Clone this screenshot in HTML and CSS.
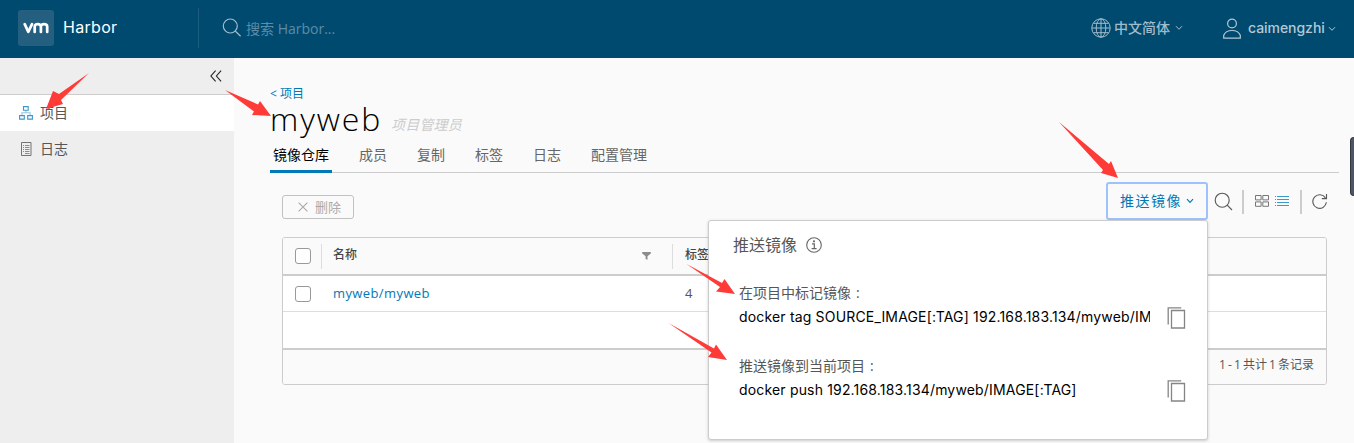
FILE: index.html
```html
<!DOCTYPE html>
<html lang="zh-CN">
<head>
<meta charset="utf-8">
<title>Harbor</title>
<link rel="stylesheet" href="styles.css">
</head>
<body>
<header class="header">
  <div class="brand">
    <span class="logo"><svg width="26" height="12" viewBox="0 0 26 12" fill="none" stroke="#fff" stroke-width="2.7" stroke-linecap="round" stroke-linejoin="round"><path d="M1.7 2.200 5.300 9.800 9 2.200"/><path d="M11.700 10V4.600Q11.700 2.200 14.700 2.200T17.900 4.600V10M17.900 4.600Q17.900 2.200 21 2.200T24.200 4.600V10"/></svg></span>
    <span class="brand-name">Harbor</span>
  </div>
  <div class="search">
    <svg width="20" height="20" viewBox="0 0 20 20" fill="none" stroke="#a3bccb" stroke-width="1.2"><circle cx="8.3" cy="8" r="7"/><path d="M13.2 13 18.6 18.3"/></svg>
    <span class="search-hint">搜索 Harbor...</span>
  </div>
  <div class="language">
    <svg width="20" height="20" viewBox="0 0 20 20" fill="none" stroke="#a3bccb" stroke-width="1"><circle cx="10" cy="10" r="9.2"/><ellipse cx="10" cy="10" rx="4.8" ry="9.2"/><path d="M10 1v18M1 10h18M2.5 5.3h15M2.5 14.7h15"/></svg>
    <span class="language-name">中文简体</span>
    <svg width="8" height="6" viewBox="0 0 8 6" fill="none" stroke="#a3bccb"><path d="M1 1.2 4 4.3 7 1.2"/></svg>
  </div>
  <div class="account">
    <svg width="20" height="22" viewBox="0 0 20 22" fill="none" stroke="#b3c8d4" stroke-width="1.2"><circle cx="10" cy="5.5" r="4.4"/><path d="M1.7 20.2V17.3Q3.7 12.5 10 12.5T18.3 17.3V20.2Z"/></svg>
    <span class="account-name">caimengzhi</span>
    <svg width="8" height="6" viewBox="0 0 8 6" fill="none" stroke="#b3c8d4"><path d="M1 1.2 4 4.3 7 1.2"/></svg>
  </div>
</header>

<div class="layout">
  <nav class="sidebar">
    <div class="collapse"><svg width="12" height="12" viewBox="0 0 12 12" fill="none" stroke="#222" stroke-width="1.1"><path d="M5.6 .7.9 6l4.7 5.3M11.1.7 6.4 6l4.7 5.3"/></svg></div>
    <a class="nav-item active">
      <svg width="14" height="14" viewBox="0 0 14 14" fill="none" stroke="#3c97cb" stroke-width="1.1"><path d="M4.5.6h4.7v3.6H4.5zM.6 9.6h4.7v3.5H.6zM8.7 9.6h4.7v3.5H8.700z"/><path d="M6.900 4.300v2.500M2.900 9.500V6.800h8.200v2.700" stroke-opacity=".55"/></svg>
      <span>项目</span>
    </a>
    <a class="nav-item">
      <svg width="14" height="14" viewBox="0 0 14 14" fill="none" stroke="#737373"><path d="M2.500.5h9.500v13h-9.500z"/><path d="M4 3.500h1M6 3.500h4.500M4 5.500h1M6 5.500h4.500M4 7.500h1M6 7.500h4.500M4 9.500h1M6 9.500h4.500M6 11.500h4.500" stroke-opacity=".8"/></svg>
      <span>日志</span>
    </a>
  </nav>

  <main class="main">
    <a class="back">&lt; 项目</a>
    <div class="title"><h1 class="project-name">myweb</h1><span class="role">项目管理员</span></div>
    <div class="tabs">
      <span class="tab current">镜像仓库</span><span class="tab">成员</span><span class="tab">复制</span><span class="tab">标签</span><span class="tab">日志</span><span class="tab">配置管理</span>
    </div>

    <section class="repositories">
      <div class="toolbar">
        <button class="delete"><svg width="10" height="10" viewBox="0 0 10 10" stroke="#aaa" stroke-width="1.1"><path d="M.6.6 9.4 9.4M9.4.6.6 9.4"/></svg><span>删除</span></button>
        <div class="actions">
          <div class="push">
            <button class="push-button"><span>推送镜像</span><svg width="8" height="6" viewBox="0 0 8 6" fill="none" stroke="#0079b8" stroke-width="1.2"><path d="M1 1.2 4 4.3 7 1.2"/></svg></button>
            <div class="popover">
              <div class="popover-title">推送镜像<svg width="16" height="16" viewBox="0 0 16 16" fill="none" stroke="#666"><circle cx="8" cy="8" r="7.3" stroke-width="1.1"/><path d="M6 6.8h2.3v4.7M5.6 11.6h5" stroke-width="1.2"/><circle cx="8" cy="4.3" r="1.1" fill="#666" stroke="none"/></svg></div>
              <div class="command-label">在项目中标记镜像<span class="colon">:</span></div>
              <div class="command"><code class="command-text">docker tag SOURCE_IMAGE[:TAG] 192.168.183.134/myweb/IMAGE[:TAG]</code><svg class="copy" width="20" height="22" viewBox="0 0 20 22" fill="none" stroke="#858585" stroke-width="1.300"><path d="M4.500 3.500h13v17.500h-13z"/><path d="M1.200 17.500V.8h13"/></svg></div>
              <div class="command-label second">推送镜像到当前项目<span class="colon">:</span></div>
              <div class="command"><code class="command-text">docker push 192.168.183.134/myweb/IMAGE[:TAG]</code><svg class="copy" width="20" height="22" viewBox="0 0 20 22" fill="none" stroke="#858585" stroke-width="1.300"><path d="M4.500 3.500h13v17.500h-13z"/><path d="M1.200 17.500V.8h13"/></svg></div>
            </div>
          </div>
          <svg class="find" width="19" height="19" viewBox="0 0 19 19" fill="none" stroke="#5a5a5a" stroke-width="1.15"><circle cx="8.2" cy="8.2" r="7"/><path d="m13.2 13.2 4.8 4.8"/></svg>
          <i class="divider"></i>
          <svg class="cards" width="14" height="12" viewBox="0 0 14 12" fill="none" stroke="#777"><path d="M.5.5h5.6v4.4H.5zM7.8.5h5.7v4.4H7.8zM.5 6.9h5.6v4.4H.5zM7.8 6.9h5.7v4.4H7.8z"/></svg>
          <svg class="list" width="14" height="12" viewBox="0 0 14 12" stroke="#3c9acb"><path d="M0 1.5h1M2 1.5h12M0 4.5h1M2 4.5h12M0 7.5h1M2 7.5h12M0 10.5h1M2 10.5h12"/></svg>
          <i class="divider"></i>
          <svg class="refresh" width="16" height="17" viewBox="0 0 16 17" fill="none" stroke="#5a5a5a" stroke-width="1.15"><path d="M14.400 9.300A6.800 6.800 0 1 1 13.400 4.900M14.500 1v4.600h-4.700"/></svg>
        </div>
      </div>

      <div class="grid">
        <div class="grid-row grid-head">
          <span class="check"></span><i class="separator"></i><span class="name">名称</span>
          <svg class="filter" width="9" height="8" viewBox="0 0 9 8" fill="#8c8c8c"><path d="M.2 0h8.6v1.4L5.5 4.3V7.8L3.6 6.9V4.3L.2 1.4z"/></svg>
          <i class="separator"></i><span class="count">标签数</span>
        </div>
        <div class="grid-row"><span class="check"></span><a class="name repo">myweb/myweb</a><span class="count tags">4</span></div>
        <div class="grid-empty"></div>
        <div class="grid-foot">1 - 1 共计 1 条记录</div>
      </div>
    </section>
  </main>
</div>

<div class="side-handle"></div>
<svg class="arrows" width="1354" height="443" viewBox="0 0 1354 443" fill="#ff3b38">
  <path d="M89 73 59 94 53 91 46 109 63 104 61 100Z"/>
  <path d="M225 90 254 111.500 252 115 271 116 260 101 258 104.500Z"/>
  <path d="M1059 122 1103 170 1101 173 1118 178 1111 161 1109 164Z"/>
  <path d="M686.500 264 720 287 716 291.500 735 294 724.500 279 722 283Z"/>
  <path d="M668.500 323 711.500 352.500 708 357 727 360 716 344.500 714 348.500Z"/>
</svg>
</body>
</html>
```
FILE: styles.css
```css
* { box-sizing: border-box; }
body {
  margin: 0;
  height: 443px;
  overflow: hidden;
  background: #fafafa;
  color: #565656;
  font: 14px/20px "Open Sans", "Noto Sans CJK SC", sans-serif;
}
svg { display: block; flex: none; }
span, a { white-space: nowrap; }
button { font: inherit; padding: 0; }

.header { display: flex; height: 58px; background: #004a70; color: #a3bccb; }
.brand { display: flex; width: 198px; padding: 10px 0 0 18px; }
.logo { display: flex; align-items: center; justify-content: center; width: 36px; height: 36px; border-radius: 3px; background: #255f80; }
.brand-name { margin: 5px 0 0 9px; color: #fff; font-size: 16px; line-height: 24px; font-family: Inter, sans-serif; letter-spacing: .3px; }
.search { display: flex; flex: 1; margin-top: 8px; height: 40px; padding: 10px 0 0 23px; border-left: 1px solid #1c5d7f; }
.search-hint { margin-left: 4px; color: #5d8ca6; font-size: 14px; line-height: 22px; }
.language { display: flex; align-items: center; width: 131px; padding-bottom: 2px; }
.language-name { margin: 0 5px 0 3px; font-weight: 500; }
.account { display: flex; align-items: center; width: 132px; padding-bottom: 1px; color: #b3c8d4; }
.account-name { margin: 0 3px 1px 6px; font: 500 14px/20px Inter, sans-serif; letter-spacing: -.05px; }

.layout { display: flex; height: 385px; }
.sidebar { width: 234px; background: #eee; flex: none; }
.collapse { height: 37px; padding: 12px 0 0 210px; border-bottom: 1px solid #ccc; }
.nav-item { display: flex; align-items: center; gap: 7px; height: 36px; padding-left: 19px; }
.nav-item.active { background: #fff; }
.main { flex: 1; padding: 27px 15px 0 36px; }

.back { display: block; height: 18px; color: #0079b8; font-size: 12px; line-height: 18px; }
.title { display: flex; height: 35px; }
.project-name { margin: 1px 0 0; width: 121px; color: #000; font: 300 32px/30px "Open Sans", sans-serif; letter-spacing: 1.9px; }
.role { color: #ccc; font-size: 14px; line-height: 20px; font-style: italic; margin-top: 12px; letter-spacing: .2px; }
.tabs { display: flex; gap: 24px; height: 35px; border-bottom: 1px solid #ccc; }
.tab { height: 35px; padding: 7px 3px 0; color: #666; }
.tab.current { color: #000; border-bottom: 3px solid #0079b8; }

.repositories { padding: 9px 12px 0; }
.toolbar { display: flex; justify-content: space-between; height: 55px; }
.delete { display: flex; align-items: center; gap: 7px; width: 72px; height: 24px; margin-top: 13px; padding-left: 15px; border: 1px solid #c1c1c1; border-radius: 3px; background: transparent; color: #aaa; font-size: 13px; line-height: 20px; }
.actions { display: flex; width: 221px; }
.push { position: relative; flex: none; width: 102px; }
.push-button { display: flex; align-items: center; width: 102px; height: 38px; padding-left: 12px; gap: 4px; border: 2px solid #9ec2fc; border-radius: 3px; background: #fafafa; color: #0079b8; font-size: 14px; letter-spacing: 1.5px; }
.popover { position: absolute; z-index: 2; top: 38px; right: 0; width: 500px; height: 220px; padding: 12px 23px; border: 1px solid #ccc; border-radius: 3px; background: #fff; box-shadow: 0 1px 3px rgba(115, 115, 115, .35); }
.popover-title { display: flex; align-items: center; gap: 9px; height: 24px; padding-left: 1px; font-size: 16px; }
.command-label { margin: 26px 0 0 7px; height: 20px; line-height: 20px; }
.command-label.second { margin-top: 24px; }
.colon { margin-left: 5px; }
.command { display: flex; justify-content: space-between; height: 29px; padding-left: 7px; }
.command-text { width: 411px; height: 24px; padding-top: 3px; overflow: hidden; white-space: nowrap; color: #000; font: 14px/22px Inter, sans-serif; letter-spacing: .17px; }
.copy { margin: 4px -3px 0 0; }
.find { margin: 10px 9px 0 6px; }
.divider { flex: none; width: 2px; height: 24px; margin-top: 8px; background: #ccc; }
.cards { margin: 13px 6px 0 11px; }
.list { margin: 13px 11px 0 0; }
.refresh { margin: 11px 0 0 10px; }

.grid { height: 148px; border: 1px solid #ccc; border-radius: 3px; background: #fff; overflow: hidden; }
.grid-row { display: flex; align-items: center; height: 36px; border-bottom: 1px solid #ddd; padding-left: 12px; font-size: 13px; }
.grid-head { height: 38px; border-bottom: 2px solid #ccc; background: #fafafa; font-size: 12px; font-weight: 500; color: #454545; }
.check { width: 16px; height: 16px; border: 1px solid #999; border-radius: 3px; background: #fff; }
.separator { width: 1px; height: 25px; background: #ddd; margin-left: 10px; }
.grid-head .name { width: 309px; margin: 0 0 2px 11px; }
.grid-head .count { margin: 0 0 2px 12px; }
.filter { margin-right: 6px; }
.grid-head .filter + .separator { margin-left: 15px; }
.repo { width: 352px; margin: 0 0 2px 22px; color: #0079b8; letter-spacing: .4px; }
.tags { margin-bottom: 2px; }
.grid-empty { height: 38px; border-bottom: 2px solid #ccc; }
.grid-foot { height: 34px; padding: 5px 12px 0 0; background: #fafafa; font-size: 12px; line-height: 20px; text-align: right; word-spacing: -1px; }

.side-handle { position: absolute; top: 137px; right: 0; width: 4px; height: 59px; border: 1px solid #343842; border-right: 0; border-radius: 4px 0 0 4px; background: #4e5665; }
.arrows { position: absolute; z-index: 3; left: 0; top: 0; pointer-events: none; }
```
